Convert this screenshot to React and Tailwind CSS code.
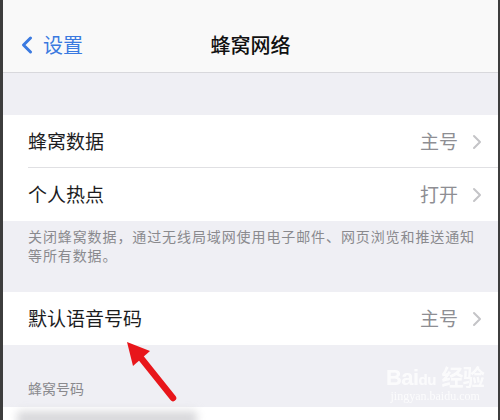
import { ChevronLeft } from "lucide-react";

const font = { fontFamily: '"Noto Sans CJK SC", "Noto Sans", sans-serif' };

function Chevron() {
  return (
    <svg className="ml-[14px] h-[16px] w-[10px]" viewBox="0 0 10 16">
      <path d="M2 2 L8 8 L2 14" fill="none" stroke="#c4c4c7" strokeWidth="2" strokeLinecap="round" strokeLinejoin="round" />
    </svg>
  );
}

function Row({ label, value, divider }) {
  return (
    <div className="relative flex h-[53px] items-center bg-white pl-[25px] pr-[16px]">
      <span className="flex-1 text-[19px] text-[#1c1c1e]">{label}</span>
      <span className="text-[19px] text-[#8e8e93]">{value}</span>
      <Chevron />
      {divider && <div className="absolute bottom-0 left-[25px] right-0 h-px bg-[#e0e0e3]" />}
    </div>
  );
}

export default function App() {
  return (
    <div style={font} className="relative h-[420px] w-[500px] overflow-hidden border-l-[3px] border-r-[2px] border-[#3d3d3d] bg-[#efeff4]">
      <div className="flex h-[73px] items-center border-b border-[#d8d8dc] bg-[#f9f9f9] pt-[18px]">
        <div className="flex w-[140px] items-center pl-[10px] text-[#3b7ae0]">
          <ChevronLeft className="h-[28px] w-[28px]" strokeWidth={2.6} />
          <span className="ml-[2px] text-[20px]">设置</span>
        </div>
        <div className="flex-1 text-center text-[20px] font-medium text-[#111]">蜂窝网络</div>
        <div className="w-[140px]" />
      </div>

      <div className="h-[42px]" />

      <div>
        <Row label="蜂窝数据" value="主号" divider />
        <Row label="个人热点" value="打开" />
      </div>

      <div className="flex h-[71px] flex-col pl-[25px] pt-[6px] text-[14px] leading-[19px] tracking-[0.9px] text-[#8a8a8e]">
        <span className="whitespace-nowrap">关闭蜂窝数据，通过无线局域网使用电子邮件、网页浏览和推送通知</span>
        <span className="whitespace-nowrap">等所有数据。</span>
      </div>

      <Row label="默认语音号码" value="主号" />

      <div className="flex h-[62px] items-end pb-[8px] pl-[25px] text-[14px] text-[#8a8a8e]">蜂窝号码</div>

      <div className="h-[20px] bg-white pl-[14px] pt-[4px]">
        <div className="h-[16px] w-[180px] rounded bg-[#d9d9dc] blur-[4px]" />
      </div>

      <svg className="absolute left-[116px] top-[337px]" width="64" height="66" viewBox="0 0 64 66">
        <line x1="54" y1="61" x2="22" y2="21" stroke="#e8161b" strokeWidth="6.5" strokeLinecap="round" />
        <polygon points="8,5 31,14 14,29" fill="#e8161b" />
      </svg>

      <div className="absolute left-[383px] top-[367px] flex flex-col items-center text-white opacity-80">
        <span style={{ fontFamily: '"Liberation Sans", "Noto Sans CJK SC", sans-serif' }} className="text-[22px] font-bold leading-none tracking-tight">
          Bai<span className="text-[15px]">du</span> 经验
        </span>
        <span style={{ fontFamily: '"Liberation Serif", serif' }} className="text-[12px] leading-tight">jingyan.baidu.com</span>
      </div>
    </div>
  );
}
